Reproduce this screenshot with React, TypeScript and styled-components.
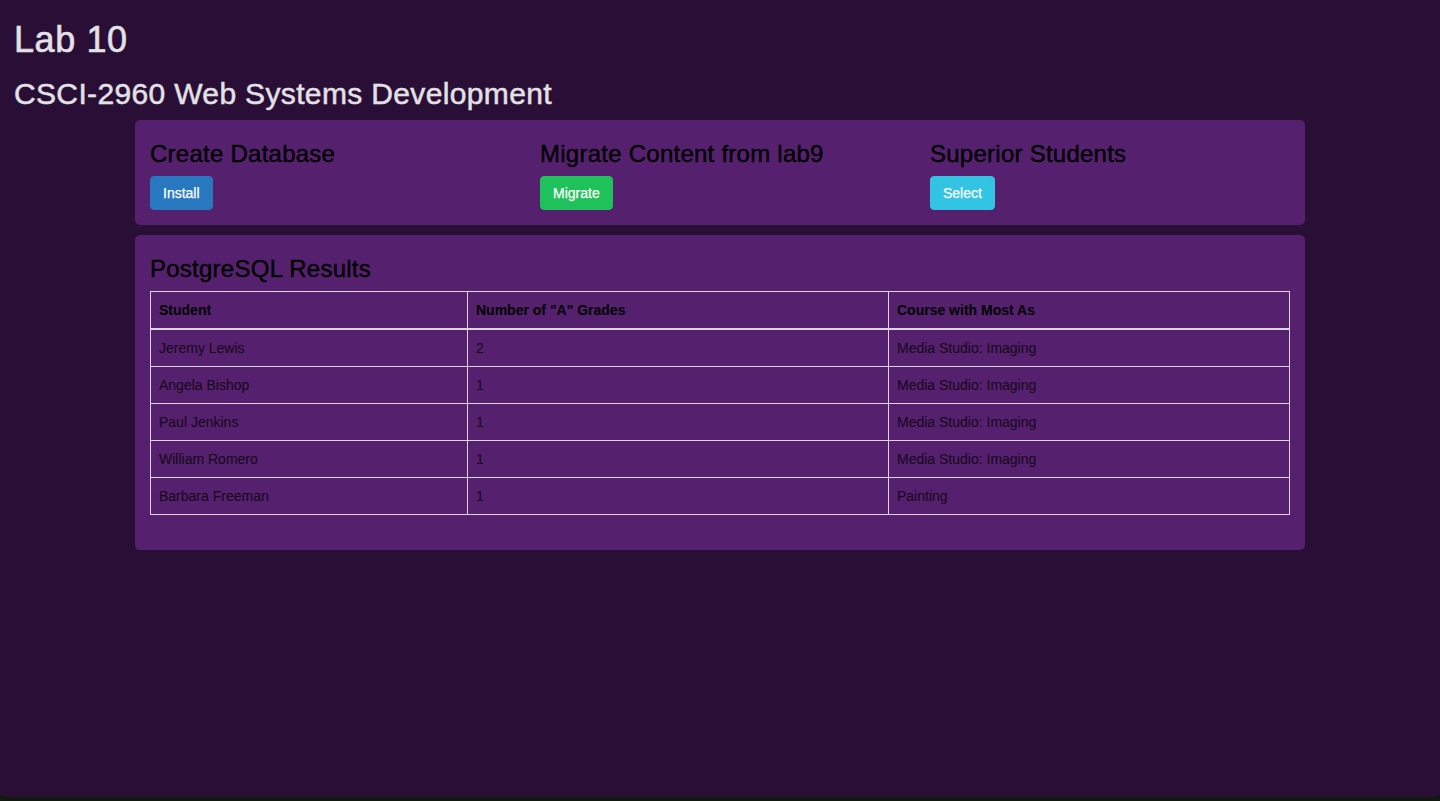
import styled, { createGlobalStyle } from 'styled-components';

const GlobalStyle = createGlobalStyle`
  html, body {
    margin: 0;
    padding: 0;
    background: #101a0e;
  }
  body {
    font-family: "Liberation Sans", Arial, sans-serif;
    font-size: 14px;
    line-height: 1.42857;
    color: #000;
  }
  * {
    box-sizing: border-box;
  }
`;

const Window = styled.div`
  height: 797px;
  background: #290f36;
  border-radius: 0 0 5px 5px;
  padding: 0 14px;
  overflow: hidden;
`;

const Title = styled.h1`
  margin: 0;
  padding-top: 20px;
  font-size: 36px;
  line-height: 1.1;
  font-weight: 400;
  letter-spacing: 0.6px;
  color: #e4e1e6;
  -webkit-text-stroke: 0.6px currentColor;
`;

const Subtitle = styled.h2`
  margin: 17px 0 0;
  font-size: 30px;
  line-height: 1.1;
  font-weight: 400;
  letter-spacing: 0.35px;
  color: #e4e1e6;
  -webkit-text-stroke: 0.5px currentColor;
`;

const Container = styled.div`
  width: 1170px;
  margin: 10px auto 0;
  display: flex;
  flex-direction: column;
  gap: 10px;
`;

const Panel = styled.section`
  background: #55206e;
  border-radius: 5px;
  padding: 21px 15px 15px;
`;

const ActionRow = styled.div`
  display: grid;
  grid-template-columns: repeat(3, 1fr);
  margin-right: -30px;
`;

const Action = styled.div`
  display: flex;
  flex-direction: column;
  align-items: flex-start;
`;

const Heading = styled.h3`
  margin: 0 0 9px;
  font-size: 24px;
  line-height: 1.1;
  font-weight: 400;
  letter-spacing: 0.25px;
  color: #000;
  -webkit-text-stroke: 0.4px currentColor;
`;

const Button = styled.button<{ $bg: string }>`
  font-family: inherit;
  font-size: 14px;
  line-height: 20px;
  padding: 6px 12px;
  color: #fff;
  background: ${(p) => p.$bg};
  border: 1px solid ${(p) => p.$bg};
  border-radius: 4px;
  cursor: pointer;
  -webkit-text-stroke: 0.25px currentColor;
`;

const Results = styled(Panel)`
  padding-bottom: 35px;
`;

const Table = styled.table`
  width: 100%;
  border-collapse: collapse;
  border: 1px solid #ddd6e0;
  font-size: 14px;
`;

const Th = styled.th<{ $w?: number }>`
  text-align: left;
  font-weight: 700;
  padding: 8px;
  line-height: 20px;
  border: 1px solid #ddd6e0;
  border-bottom: 2px solid #ddd6e0;
  color: #000;
  width: ${(p) => (p.$w ? `${p.$w}px` : 'auto')};
`;

const Td = styled.td`
  padding: 8px;
  line-height: 20px;
  border: 1px solid #ddd6e0;
  color: #140818;
`;

const rows = [
  ['Jeremy Lewis', '2', 'Media Studio: Imaging'],
  ['Angela Bishop', '1', 'Media Studio: Imaging'],
  ['Paul Jenkins', '1', 'Media Studio: Imaging'],
  ['William Romero', '1', 'Media Studio: Imaging'],
  ['Barbara Freeman', '1', 'Painting'],
];

export default function App() {
  return (
    <>
      <GlobalStyle />
      <Window>
        <Title>Lab 10</Title>
        <Subtitle>CSCI-2960 Web Systems Development</Subtitle>
        <Container>
          <Panel>
            <ActionRow>
              <Action>
                <Heading>Create Database</Heading>
                <Button $bg="#2878c0">Install</Button>
              </Action>
              <Action>
                <Heading>Migrate Content from lab9</Heading>
                <Button $bg="#1fc25a">Migrate</Button>
              </Action>
              <Action>
                <Heading>Superior Students</Heading>
                <Button $bg="#33c4e3">Select</Button>
              </Action>
            </ActionRow>
          </Panel>
          <Results>
            <Heading>PostgreSQL Results</Heading>
            <Table>
              <thead>
                <tr>
                  <Th $w={317}>Student</Th>
                  <Th $w={421}>Number of "A" Grades</Th>
                  <Th>Course with Most As</Th>
                </tr>
              </thead>
              <tbody>
                {rows.map((r) => (
                  <tr key={r[0]}>
                    <Td>{r[0]}</Td>
                    <Td>{r[1]}</Td>
                    <Td>{r[2]}</Td>
                  </tr>
                ))}
              </tbody>
            </Table>
          </Results>
        </Container>
      </Window>
    </>
  );
}
